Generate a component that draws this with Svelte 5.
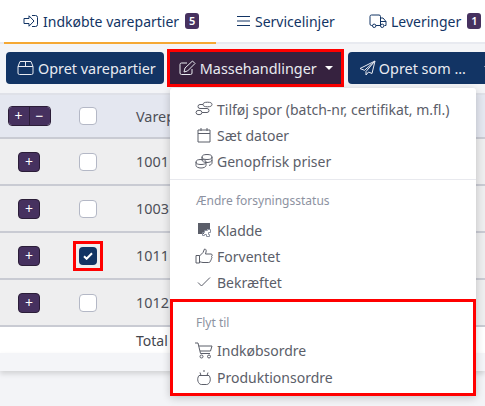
<script>
	const rows = [
		{ id: '1001', checked: false },
		{ id: '1003', checked: false },
		{ id: '1011', checked: true },
		{ id: '1012', checked: false }
	];
</script>

<div class="page">
	<nav class="tabs">
		<div class="tab active">
			<svg width="16" height="16" viewBox="0 0 16 16"><path d="M1 5.500h5V2.800L11 8l-5 5.200v-2.700H1zM9 2.500h3.500a2 2 0 0 1 2 2v7a2 2 0 0 1-2 2H9" /></svg>
			<span>Indkøbte varepartier</span>
			<b class="badge">5</b>
		</div>
		<div class="tab second">
			<svg width="15" height="16" viewBox="0 0 15 16"><path d="M1 3.500h13M1 8h13M1 12.500h13" /></svg>
			<span>Servicelinjer</span>
		</div>
		<div class="tab third">
			<svg width="18" height="16" viewBox="0 0 18 16"><path d="M3.500 12.500H2.500a1.500 1.500 0 0 1-1.500-1.500V3.500A1.500 1.500 0 0 1 2.500 2h7.500a1.500 1.500 0 0 1 1.500 1.500v9H7M11.500 5h2.500l3 3.500v4h-1.500M11.500 8.500H17" /><circle cx="5.200" cy="12.800" r="1.700" /><circle cx="13.200" cy="12.800" r="1.700" /></svg>
			<span>Leveringer</span>
			<b class="badge">1</b>
		</div>
	</nav>

	<div class="toolbar">
		<button class="btn navy">
			<svg width="17" height="16" viewBox="0 0 17 16"><path d="M1 6.500 3 1.500h11l2 5v6.500a1.500 1.500 0 0 1-1.500 1.500h-12A1.500 1.500 0 0 1 1 13zM1 6.500h15M8.500 1.500v5" /></svg>
			<span>Opret varepartier</span>
		</button>
		<button class="btn plum marked">
			<svg width="17" height="16" viewBox="0 0 17 16"><path d="M13 9v4a1.500 1.500 0 0 1-1.500 1.500h-9A1.500 1.500 0 0 1 1 13V4.500A1.500 1.500 0 0 1 2.500 3H8M6 8l7.500-7 2.500 2.500-7.500 7.500-3.500 1z" /></svg>
			<span>Massehandlinger</span>
			<i class="caret"></i>
		</button>
		<button class="btn navy last">
			<svg width="17" height="16" viewBox="0 0 17 16"><path d="M16 1 1 8.500l4.500 1.800L16 1 7 11.500V15l2.500-3 3.500 1.500z" /></svg>
			<span>Opret som ...</span>
			<i class="caret"></i>
		</button>
	</div>

	<div class="grid">
		<div class="row head">
			<div class="exp">
				<span class="pair">
					<span class="sq">+</span><span class="sq">−</span>
				</span>
			</div>
			<div class="chk"><span class="box"></span></div>
			<div class="val">Varepartier</div>
		</div>
		{#each rows as r}
			<div class="row">
				<div class="exp"><span class="sq solo">+</span></div>
				<div class="chk">
					{#if r.checked}
						<span class="ring">
							<span class="box on">
								<svg width="10" height="8" viewBox="0 0 10 8"><path d="M1 4.200 3.600 6.800 9 1.200" /></svg>
							</span>
						</span>
					{:else}
						<span class="box"></span>
					{/if}
				</div>
				<div class="val">{r.id}</div>
			</div>
		{/each}
		<div class="total">
			<div class="val">Total</div>
		</div>
		<div class="tail"></div>
	</div>

	<div class="menu">
		<ul>
			<li>
				<svg width="18" height="16" viewBox="0 0 18 16"><ellipse cx="12.500" cy="3.500" rx="4.500" ry="2.300" /><ellipse cx="4" cy="11.500" rx="3" ry="2.200" /><path d="M8 3.500H5a2 2 0 0 0 0 4h7a2 2 0 0 1 0 4H7" /></svg>
				<span>Tilføj spor (batch-nr, certifikat, m.fl.)</span>
			</li>
			<li>
				<svg width="18" height="16" viewBox="0 0 18 16"><path d="M3 3h12v12H3zM3 6.500h12M6 1v3M12 1v3" /></svg>
				<span>Sæt datoer</span>
			</li>
			<li>
				<svg width="18" height="16" viewBox="0 0 18 16"><ellipse cx="12" cy="4" rx="5" ry="2.500" /><path d="M7 4v3c0 1.400 2.200 2.500 5 2.500s5-1.100 5-2.500V4M17 7v3c0 1.200-1.200 2-3 2.400" /><ellipse cx="6" cy="9" rx="5" ry="2.500" /><path d="M1 9v3.500C1 13.900 3.200 15 6 15s5-1.100 5-2.500V9" /></svg>
				<span>Genopfrisk priser</span>
			</li>
		</ul>
		<hr />
		<p class="label">Ændre forsyningsstatus</p>
		<ul>
			<li>
				<svg width="18" height="16" viewBox="0 0 18 16"><path class="fill" d="M3 1h12v6h-3v2H9v3H3z" /><path class="patch" d="M9.500 8.500h3v-1h3v3h-2v2h1v2h-3v-2h-2v1h-2v-3h2z" /></svg>
				<span>Kladde</span>
			</li>
			<li>
				<svg width="18" height="16" viewBox="0 0 18 16"><path d="M1 7.500h3.500v7.500H1zM4.500 8 8 4.500 9.500 1c1.500 0 2 1.200 1.500 3L10.500 6H16c1.500 0 1.500 2 .5 2.500.8.800.5 2-.4 2.400.4 1-.1 1.800-.9 2 .2 1-.5 1.600-1.500 1.600H8c-1.500 0-2-.5-3.500-.8" /></svg>
				<span>Forventet</span>
			</li>
			<li>
				<svg width="18" height="16" viewBox="0 0 18 16"><path d="M3 8.500 6.500 12 15 3.500" /></svg>
				<span>Bekræftet</span>
			</li>
		</ul>
		<div class="moveto">
			<p class="label">Flyt til</p>
			<ul>
				<li>
					<svg width="18" height="18" viewBox="0 0 18 18"><path d="M0 1h3l2.500 10.500H15M3.700 4H17l-1.500 5H5" /><circle cx="6.500" cy="14.500" r="1.500" /><circle cx="14" cy="14.500" r="1.500" /></svg>
					<span>Indkøbsordre</span>
				</li>
				<li>
					<svg width="18" height="16" viewBox="0 0 18 16"><path d="M4 5.500h10c1.300 1.800 1.600 3.800 1 5.800-.4 1.500-1.700 3.200-3.300 3.200H6.300c-1.600 0-2.900-1.700-3.300-3.200-.6-2-.3-4 1-5.800zM6 5.500 5 2.500M12 5.500l1-3M8 1h2" /></svg>
					<span>Produktionsordre</span>
				</li>
			</ul>
		</div>
	</div>
</div>

<style>
	:global(body) {
		margin: 0;
		background: #f3f4f7;
		font-family: 'Noto Sans', sans-serif;
	}

	svg {
		fill: none;
		stroke: currentColor;
		stroke-width: 1;
		flex: none;
	}

	.page {
		position: relative;
		width: 485px;
		height: 406px;
		overflow: hidden;
	}

	.tabs {
		display: flex;
		height: 42px;
		padding-left: 4px;
		background: #fff;
		border-bottom: 2px solid #e8eaf0;
		color: #123464;
		font-size: 14px;
	}

	.tab {
		display: flex;
		align-items: center;
		gap: 4px;
		height: 44px;
		box-sizing: border-box;
		border-bottom: 2px solid transparent;
		white-space: nowrap;
		flex: none;
	}

	.tab.active {
		width: 212px;
		padding-left: 19px;
		border-bottom-color: #f5a833;
	}

	.tab.second {
		margin-left: 20px;
		width: 133px;
	}

	.badge {
		display: block;
		width: 14px;
		height: 16px;
		margin-left: 2px;
		border-radius: 3px;
		background: #46315f;
		color: #fff;
		font-size: 11px;
		font-weight: 600;
		line-height: 16px;
		text-align: center;
	}

	.toolbar {
		display: flex;
		gap: 5px;
		height: 32px;
		padding: 8px 6px 9px;
		border-bottom: 2px solid #dfe1e8;
	}

	.btn {
		display: flex;
		align-items: center;
		gap: 4px;
		height: 32px;
		padding: 0 8px 0 11px;
		border: 0;
		border-radius: 4px;
		color: #e9ebf1;
		font: 14.4px 'Noto Sans', sans-serif;
		white-space: nowrap;
		flex: none;
	}

	.navy {
		background: #123464;
	}

	.plum {
		background: #36223f;
	}

	.marked {
		width: 171px;
		padding: 0 8px 0 9px;
		margin: 0 2px 0 1px;
		border-radius: 0;
		outline: 3px solid #f00;
	}

	.caret {
		margin-left: auto;
		border: 4px solid transparent;
		border-top-color: #fff;
		border-bottom: 0;
	}

	.last {
		gap: 3px;
	}

	.last .caret {
		margin-left: 15px;
	}

	.grid {
		color: #4d4f57;
		font-size: 14.4px;
	}

	.row {
		display: grid;
		grid-template-columns: 58px 60px 1fr;
		height: 45px;
		align-items: center;
		background: #eeeeef;
		border-bottom: 2px solid #c9cbd3;
	}

	.row.head {
		height: 42px;
		background: #e4e7f0;
	}

	.val {
		padding-left: 18px;
	}

	.exp,
	.chk {
		display: flex;
		justify-content: center;
	}

	.pair {
		display: flex;
		border-radius: 4px;
		overflow: hidden;
		border: 1px solid #2b1d38;
	}

	.sq {
		display: block;
		width: 20px;
		height: 18px;
		background: #46315f;
		color: #fff;
		font-size: 14px;
		line-height: 18px;
		text-align: center;
	}

	.pair .sq + .sq {
		border-left: 1px solid #2b1d38;
	}

	.solo {
		border: 1px solid #2b1d38;
		border-radius: 4px;
	}

	.box {
		display: flex;
		align-items: center;
		justify-content: center;
		width: 16px;
		height: 16px;
		border: 1px solid #b4b8c6;
		border-radius: 4px;
		background: #fff;
	}

	.box.on {
		width: 18px;
		height: 18px;
		border: 0;
		background: #123464;
	}

	.box.on svg {
		stroke: #fff;
		stroke-width: 2;
	}

	.ring {
		display: block;
		padding: 3px;
		border: 3px solid #f00;
	}

	.total {
		height: 26px;
		background: #fff;
		font-size: 14px;
		line-height: 27px;
		color: #44464e;
		padding-left: 118px;
	}

	.tail {
		height: 18px;
		background: #f4f5f8;
		box-shadow: 0 3px 5px #0002;
	}

	.menu {
		position: absolute;
		left: 170px;
		top: 88px;
		width: 306px;
		height: 308px;
		box-sizing: border-box;
		padding-top: 8px;
		background: #fff;
		border-radius: 3px;
		box-shadow: 0 2px 8px #0003;
		color: #5b5e69;
		font-size: 14px;
	}

	ul {
		list-style: none;
		margin: 0;
		padding: 0;
	}

	li {
		display: flex;
		align-items: center;
		gap: 4px;
		height: 26px;
		padding-left: 25px;
		white-space: nowrap;
	}

	hr {
		margin: 5px 0 0;
		border: 0;
		border-top: 1px solid #e8e9ee;
	}

	.label {
		margin: 0;
		padding: 13px 0 8px 26px;
		color: #8d92a1;
		font-size: 12px;
		line-height: 16px;
	}

	.fill {
		fill: currentColor;
		stroke: none;
	}

	.patch {
		stroke: #8d92a1;
	}

	.moveto {
		position: absolute;
		left: 0;
		right: 0;
		top: 211px;
		bottom: 0;
		border: 3px solid #f00;
	}

	.moveto .label {
		padding: 13px 0 6px 23px;
	}

	.moveto li {
		height: 27px;
		padding-left: 22px;
	}
</style>
